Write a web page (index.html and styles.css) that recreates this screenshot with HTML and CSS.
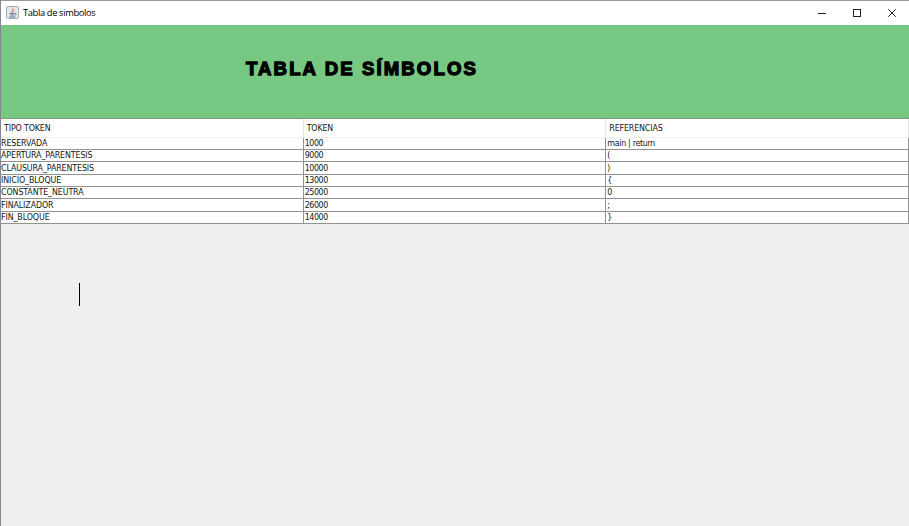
FILE: index.html
```html
<!DOCTYPE html>
<html lang="es">
<head>
<meta charset="utf-8">
<title>Tabla de simbolos</title>
<link rel="stylesheet" href="styles.css">
</head>
<body>
<div class="window">
  <header class="titlebar">
    <svg class="java" width="13" height="13" viewBox="0 0 13 13">
      <rect x=".5" y=".5" width="12" height="12" rx="1.5" fill="#e4e9ed" stroke="#a3afb9"/>
      <path d="M6.8 1.5C8 3 4.8 4 6.3 6.8M8.5 3.5C6.6 4.8 7.3 5.4 7.2 6.6" fill="none" stroke="#dc8352" stroke-width="1"/>
      <path d="M3.5 7.5h5M4 9h4.2M3 11h6.5M8.8 7.2c2-.2 1.6 1.6 0 2" fill="none" stroke="#587a9c" stroke-width="1"/>
    </svg>
    <span class="caption">Tabla de simbolos</span>
    <svg class="controls" width="80" height="12" viewBox="0 0 80 12" fill="none" stroke="#222" stroke-width="1">
      <path d="M0 6.5h8"/>
      <rect x="35.5" y="2.5" width="7" height="7"/>
      <path d="M70.2 2.2l7.6 7.6M77.8 2.2l-7.6 7.6"/>
    </svg>
  </header>
  <div class="banner"><h1>TABLA DE SÍMBOLOS</h1></div>
  <table class="symbols">
    <thead><tr><th>TIPO TOKEN</th><th>TOKEN</th><th>REFERENCIAS</th></tr></thead>
    <tbody>
      <tr><td>RESERVADA</td><td>1000</td><td>main | return</td></tr>
      <tr><td>APERTURA_PARENTESIS</td><td>9000</td><td>(</td></tr>
      <tr class="tall"><td>CLAUSURA_PARENTESIS</td><td>10000</td><td>)</td></tr>
      <tr><td>INICIO_BLOQUE</td><td>13000</td><td>{</td></tr>
      <tr><td>CONSTANTE_NEUTRA</td><td>25000</td><td>0</td></tr>
      <tr class="tall"><td>FINALIZADOR</td><td>26000</td><td>;</td></tr>
      <tr><td>FIN_BLOQUE</td><td>14000</td><td>}</td></tr>
    </tbody>
  </table>
  <div class="workspace"><div class="caret"></div></div>
</div>
</body>
</html>
```
FILE: styles.css
```css
* { box-sizing: border-box; }
body { margin: 0; background: #efefef; color: #151515; font-family: "DejaVu Sans Condensed", "DejaVu Sans", sans-serif; }
.window { width: 909px; height: 526px; overflow: hidden; display: flex; flex-direction: column; border-left: 1px solid #858894; }
.titlebar { height: 25px; flex: none; display: flex; align-items: center; background: #fff; border-top: 1px solid #999; margin-left: -1px; padding: 0 12px 1px 6px; }
.caption { font: 9.3px/12px "Open Sans", sans-serif; color: #000; margin-left: 4px; letter-spacing: -.35px; }
.controls { margin-left: auto; margin-right: -1px; }
.banner { height: 94px; flex: none; background: #77c883; border-bottom: 1px solid #7a9a80; margin-left: -1px; border-left: 1px solid #69ae75; padding: 32px 0 0 245px; }
h1 { margin: 0; font: bold 18.6px/24px "Liberation Sans", sans-serif; letter-spacing: 2.1px; color: #000; -webkit-text-stroke: 1.3px #000; white-space: nowrap; }
.symbols { width: 908px; flex: none; table-layout: fixed; border-collapse: separate; border-spacing: 0; background: #fff; }
th { height: 19px; padding: 0 0 0 3px; text-align: left; font-weight: normal; font-size: 8.8px; line-height: 18px; letter-spacing: -.14px; border-right: 1px solid #e5e5e5; border-bottom: 1px solid #eee; }
td { height: 12px; padding: 0; font-size: 8.8px; line-height: 11px; letter-spacing: -.1px; border-right: 1px solid #929292; border-bottom: 1px solid #929292; white-space: nowrap; }
td:nth-child(2) { letter-spacing: -.4px; padding-left: 1px; }
td:nth-child(3) { letter-spacing: -.3px; padding-left: 1px; }
.tall td { height: 13px; line-height: 12px; }
.workspace { flex: 1; padding: 59px 0 0 78px; }
.caret { width: 1px; height: 23px; background: #000; }
```
